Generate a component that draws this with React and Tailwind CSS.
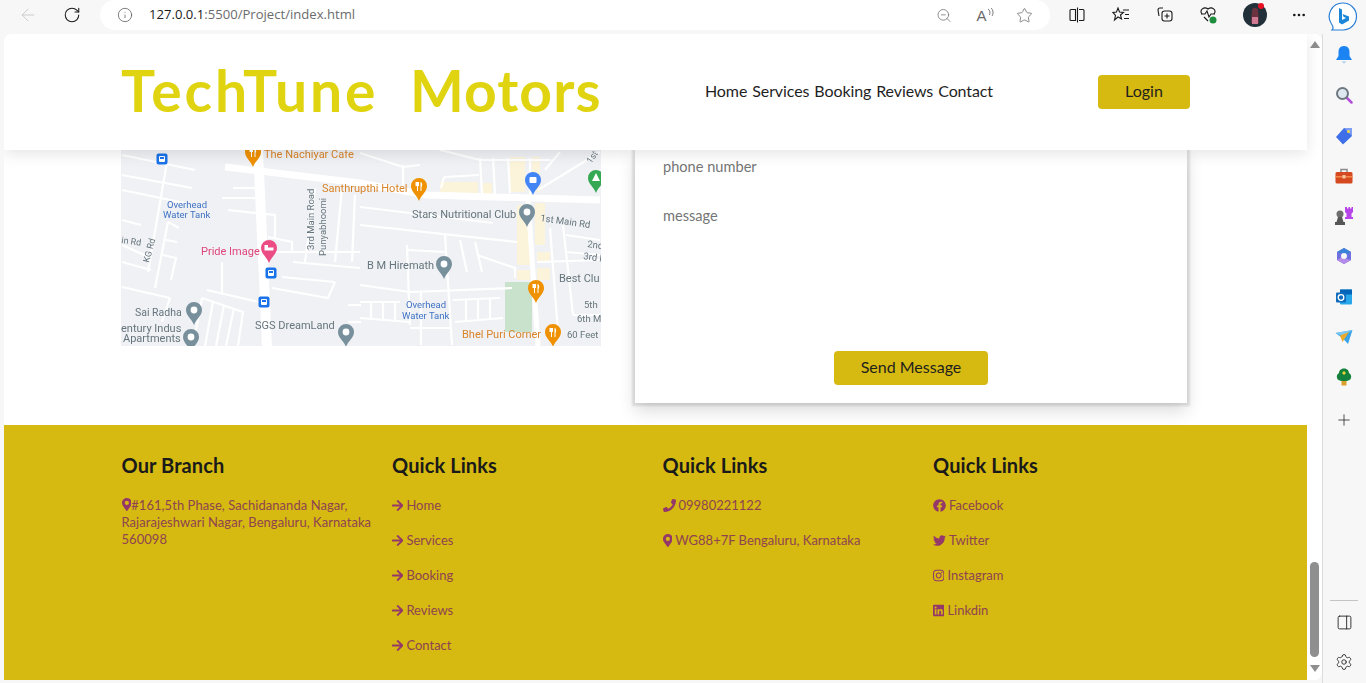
import { ArrowLeft, RotateCw, Info, ZoomOut, Star, Plus, MoreHorizontal, Settings, PanelRight } from 'lucide-react';
import { FaMapMarkerAlt, FaArrowRight, FaPhone, FaFacebook, FaTwitter, FaInstagram, FaLinkedin } from 'react-icons/fa';

const quickLinks = ['Home', 'Services', 'Booking', 'Reviews', 'Contact'];
const socials = [
  { icon: FaFacebook, label: 'Facebook', width: 'w-[13px]' },
  { icon: FaTwitter, label: 'Twitter', width: 'w-[13px]' },
  { icon: FaInstagram, label: 'Instagram', width: 'w-[11.400px]' },
  { icon: FaLinkedin, label: 'Linkdin', width: 'w-[11.400px]' },
];

const Pin = ({ x, y, fill, children }) => (
  <g transform={`translate(${x} ${y})`}>
    <path d="M0 14C-2 8-8 5-8 -1A8 8 0 0 1 8 -1C8 5 2 8 0 14Z" fill={fill} />
    {children || <circle cx="0" cy="-1" r="3.4" fill="#fff" />}
  </g>
);

const Fork = () => (
  <path d="M-3.5 -5V-1H-2V4H-1V-1H0V-5M2 -5C3.5 -4 3.5 -1 2.5 0V4H1.5V-5Z" fill="#fff" />
);

const Bus = ({ x, y }) => (
  <g transform={`translate(${x} ${y})`}>
    <rect x="-5.5" y="-5.5" width="11" height="11" rx="2" fill="#1a73e8" />
    <rect x="-3" y="-3" width="6" height="6" rx="1" fill="#fff" />
    <rect x="-2" y="-2" width="4" height="2" fill="#1a73e8" />
  </g>
);

const MapLabel = ({ x, y, color = '#66757d', size = 11, rotate, children }) => (
  <text
    x={x}
    y={y}
    fill={color}
    fontSize={size}
    fontFamily="Roboto, sans-serif"
    transform={rotate ? `rotate(${rotate} ${x} ${y})` : undefined}
  >
    {children}
  </text>
);

// street lines read off the map, left half then right half
const thinRoads = [
  'M1 5L74 20', 'M1 25L71 38', 'M1 40L64 53', 'M46 12L27 122', 'M47 72L34 138', 'M1 70L20 75', 'M1 95L30 108', 'M1 137L49 148', 'M49 148L41 172',
  'M1 112L30 120', 'M47 72L58 78', 'M45 90L56 92', 'M42 105L55 108L50 130',
  'M112 38H137', 'M101 48H137', 'M107 60L154 65L154 88', 'M147 87L171 92V102', 'M101 112V145', 'M86 140L138 152',
  'M154 102H239', 'M172 112L239 118', 'M151 138L207 148L214 132', 'M161 127L214 132', 'M194 38L184 112', 'M221 38L214 112', 'M234 45L231 112',
  'M81 148L72 196', 'M92 152L84 196', 'M103 155L95 196', 'M113 158L105 196', 'M81 148L122 162L117 196', 'M227 155H240', 'M227 172H240',
  'M239 57L372 73', 'M239 75L396 92', 'M324 85L331 195', 'M286 95L289 175', 'M286 100L325 102', 'M339 90L346 122', 'M354 92L361 122',
  'M356 105L394 118V128', 'M239 135L289 142L391 138', 'M239 152H279', 'M332 150L379 148', 'M334 172L382 168', 'M239 168L289 172',
  'M345 150V170', 'M357 150V170', 'M369 149V169', 'M250 152V170', 'M262 152V170', 'M274 152V170', 'M300 142V195', 'M289 178H330',
  'M359 8L361 45', 'M372 8L374 45', 'M387 8L389 43', 'M409 8V45', 'M239 3L282 17L299 15', 'M282 15V42', 'M319 0L359 10', 'M323 27L320 38', 'M323 27L358 25',
  'M417 40L479 2', 'M439 2L424 20', 'M429 78L437 182', 'M442 75L452 165', 'M445 85L479 90', 'M445 102L479 105', 'M416 112L479 110', 'M452 165H479', 'M360 10H430',
];

const MapDrawing = () => (
  <svg width="480" height="196" viewBox="0 0 480 196" className="block blur-[0.3px]">
    <rect width="480" height="196" fill="#eff1f4" />
    <g fill="#fbf3da">
      <rect x="389" y="7" width="15" height="35" />
      <rect x="396" y="55" width="13" height="60" />
      <rect x="414" y="53" width="10" height="42" />
      <rect x="416" y="102" width="13" height="10" />
      <rect x="416" y="118" width="13" height="12" />
      <rect x="396" y="120" width="13" height="10" />
      <rect x="362" y="33" width="9" height="12" />
      <rect x="319" y="32" width="38" height="11" />
      <rect x="411" y="7" width="8" height="35" />
    </g>
    <rect x="384" y="132" width="27" height="50" fill="#c8e2cb" />
    <g stroke="#fff" fill="none" strokeWidth="2.2">
      {thinRoads.map((d) => (
        <path key={d} d={d} />
      ))}
    </g>
    <g stroke="#fff" fill="none">
      <path d="M137 0L146 196" strokeWidth="10" />
      <path d="M104 17L239 33L305 45L479 50" strokeWidth="7" />
      <path d="M407 50L417 196" strokeWidth="5" />
    </g>
    <MapLabel x={143} y={8} color="#d9842a">The Nachiyar Cafe</MapLabel>
    <MapLabel x={201} y={42} color="#d9842a">Santhrupthi Hotel</MapLabel>
    <MapLabel x={46} y={58} color="#3f72c4" size={9.5}>Overhead</MapLabel>
    <MapLabel x={42} y={68} color="#3f72c4" size={9.5}>Water Tank</MapLabel>
    <MapLabel x={0} y={93} size={9} rotate={8}>in Rd</MapLabel>
    <MapLabel x={28} y={113} size={9} rotate={-75}>KG Rd</MapLabel>
    <MapLabel x={193} y={100} size={9.5} rotate={-90}>3rd Main Road</MapLabel>
    <MapLabel x={205} y={106} size={9.5} rotate={-90}>Punyabhoomi</MapLabel>
    <MapLabel x={80} y={105} color="#e0457b">Pride Image</MapLabel>
    <MapLabel x={14} y={166} size={10.5}>Sai Radha</MapLabel>
    <MapLabel x={0} y={182}>entury Indus</MapLabel>
    <MapLabel x={2} y={192}>Apartments</MapLabel>
    <MapLabel x={134} y={179}>SGS DreamLand</MapLabel>
    <MapLabel x={291} y={68} size={11}>Stars Nutritional Club</MapLabel>
    <MapLabel x={419} y={71} size={9.5} rotate={8}>1st Main Rd</MapLabel>
    <MapLabel x={466} y={97} size={9.5} rotate={8}>2nd</MapLabel>
    <MapLabel x={462} y={109} size={9.5} rotate={8}>3rd R</MapLabel>
    <MapLabel x={246} y={119}>B M Hiremath</MapLabel>
    <MapLabel x={285} y={158} color="#3f72c4" size={9.5}>Overhead</MapLabel>
    <MapLabel x={281} y={169} color="#3f72c4" size={9.5}>Water Tank</MapLabel>
    <MapLabel x={438} y={132}>Best Clu</MapLabel>
    <MapLabel x={463} y={158} size={9.5}>5th</MapLabel>
    <MapLabel x={456} y={172} size={9.5}>6th M</MapLabel>
    <MapLabel x={446} y={188} size={9.5}>60 Feet</MapLabel>
    <MapLabel x={341} y={188} color="#d9842a">Bhel Puri Corner</MapLabel>
    <MapLabel x={470} y={14} size={9} rotate={-55}>1st</MapLabel>
    <Pin x={132} y={3} fill="#ef9100"><Fork /></Pin>
    <Pin x={298} y={37} fill="#ef9100"><Fork /></Pin>
    <Pin x={415} y={139} fill="#ef9100"><Fork /></Pin>
    <Pin x={432} y={183} fill="#ef9100"><Fork /></Pin>
    <Pin x={412} y={31} fill="#4285f4"><rect x="-3.5" y="-4" width="7" height="6" rx="1" fill="#fff" /></Pin>
    <Pin x={475} y={29} fill="#34a853"><path d="M0 -6L4 2H-4Z" fill="#fff" /></Pin>
    <Pin x={148} y={99} fill="#ec4c84"><path d="M-4.5 -4V1.500H4.500V-1.500H-1V-4Z" fill="#fff" /></Pin>
    <Pin x={73} y={161} fill="#78909c" />
    <Pin x={70} y={188} fill="#78909c" />
    <Pin x={225} y={183} fill="#78909c" />
    <Pin x={406} y={63} fill="#78909c" />
    <Pin x={323} y={115} fill="#78909c" />
    <Bus x={41} y={9} />
    <Bus x={150} y={123} />
    <Bus x={143} y={152} />
  </svg>
);

const ToolSlot = ({ children }) => (
  <div className="flex h-[30px] w-[44px] shrink-0 items-center justify-center">{children}</div>
);

const Toolbar = () => (
  <div className="flex h-[34px] shrink-0 items-start pl-[6px]">
    <ToolSlot><ArrowLeft size={20} strokeWidth={1} className="text-[#c4c4c4]" /></ToolSlot>
    <ToolSlot><RotateCw size={18} strokeWidth={1.4} className="text-[#1a1a1a]" /></ToolSlot>
    <div className="ml-[6px] flex h-[30px] w-[950px] shrink-0 items-center rounded-r-[15px] rounded-l-[15px] bg-white pl-[17px] pr-[16px]">
      <Info size={16} strokeWidth={1.2} className="text-[#5f5f5f]" />
      <span className="ml-[16px] font-['Open_Sans',sans-serif] text-[13.100px] text-[#6b6b6b]">
        <span className="text-[#1a1a1a]">127.0.0.1</span>:5500/Project/index.html
      </span>
      <div className="ml-auto flex items-center gap-[19px]">
        <div className="flex w-[20px] justify-center pr-[4px]"><ZoomOut size={17} strokeWidth={1.1} className="text-[#6a6a6a]" /></div>
        <div className="flex w-[20px] items-start justify-center text-[#6a6a6a]">
          <span className="font-['Liberation_Sans',sans-serif] text-[15px] leading-none">A</span>
          <svg width="7" height="9" viewBox="0 0 7 9" fill="none" stroke="currentColor" strokeWidth="0.9">
            <path d="M1 1C3 2 3.500 5 2.500 7M4 0C6.500 2 6.500 6 5 8" />
          </svg>
        </div>
        <div className="flex w-[20px] justify-center"><Star size={17} strokeWidth={1.1} className="text-[#6a6a6a]" /></div>
      </div>
    </div>
    <div className="ml-[5px] flex">
      <ToolSlot>
        <svg width="18" height="18" viewBox="0 0 18 18" fill="none" stroke="#1a1a1a" strokeWidth="1.1">
          <path d="M7.500 3.500H3A1 1 0 0 0 2 4.500V13.500A1 1 0 0 0 3 14.500H7.500Z" />
          <path d="M11 3.500H15A1 1 0 0 1 16 4.500V13.500A1 1 0 0 1 15 14.500H11M9.500 1.500V16.500" />
        </svg>
      </ToolSlot>
      <ToolSlot>
        <svg width="18" height="18" viewBox="0 0 18 18" fill="none" stroke="#1a1a1a" strokeWidth="1.1">
          <path d="M6 2L7.500 6L11.500 6.500L8.500 9L9.500 13L6 11L2.500 14L3.500 9.500L1 6.500L4.500 6Z" />
          <path d="M11 4H17M13 8.500H17M12 12.500H17" />
        </svg>
      </ToolSlot>
      <ToolSlot>
        <svg width="18" height="18" viewBox="0 0 18 18" fill="none" stroke="#1a1a1a" strokeWidth="1.1">
          <path d="M7 2H4A2 2 0 0 0 2 4L3 10" />
          <rect x="6" y="5" width="10" height="10" rx="2.500" />
          <path d="M11 7.500V12.500M8.500 10H13.500" />
        </svg>
      </ToolSlot>
      <ToolSlot>
        <svg width="20" height="20" viewBox="0 0 20 20" fill="none">
          <path d="M3 9C0 5 5 1 9 4C13 1 18 5 15 9" stroke="#1a1a1a" strokeWidth="1.1" />
          <path d="M2 9H6L8 6L10 12L12 9H16M5 12L9 16" stroke="#1a1a1a" strokeWidth="1.1" />
          <circle cx="14" cy="15" r="3.500" fill="#1e8e3e" />
        </svg>
      </ToolSlot>
      <div className="relative ml-[2px] flex h-[30px] w-[44px] shrink-0 items-center justify-center">
        <svg width="24" height="24" viewBox="0 0 24 24">
          <circle cx="12" cy="12" r="12" fill="#22303a" />
          <path d="M9 7C10 4 14 4 15 7L16 20H8Z" fill="#6b3240" />
          <path d="M9 14H15V21H9Z" fill="#cf7a92" />
        </svg>
        <div className="absolute left-[25px] top-[3px] h-[6px] w-[6px] rounded-full bg-[#e81123]" />
      </div>
      <ToolSlot><MoreHorizontal size={16} className="text-[#1a1a1a]" /></ToolSlot>
      <div className="flex h-[34px] w-[44px] shrink-0 items-center justify-center">
        <svg width="30" height="30" viewBox="0 0 30 30" fill="none">
          <path d="M15 1A13.500 13.500 0 0 1 15 28H4C6 26 5 24 3.500 22A13.500 13.500 0 0 1 15 1Z" fill="#fff" stroke="#2b7fd6" strokeWidth="1.2" />
          <path d="M11 6L14 7.500V18L18 16L15.500 14.800L14.500 12L21 14.500V18.500L14 22.500L11 20.500Z" fill="#1a86d8" />
        </svg>
      </div>
    </div>
  </div>
);

const sideIcons = [
  <svg key="bell" width="18" height="20" viewBox="0 0 18 20"><path d="M9 1C5 1 3.500 4 3.500 7V11L1 15H17L14.500 11V7C14.500 4 13 1 9 1Z" fill="#1b84f2" /><path d="M6.500 16.500H11.500L9 18.500Z" fill="#9fc8f5" /></svg>,
  <svg key="search" width="18" height="18" viewBox="0 0 18 18" fill="none"><path d="M11 11L16.500 16.500" stroke="#b14fd8" strokeWidth="2.500" strokeLinecap="round" /><circle cx="7.500" cy="7.500" r="5.500" fill="#dfe7ee" stroke="#6d7780" strokeWidth="2" /></svg>,
  <svg key="tag" width="18" height="18" viewBox="0 0 18 18"><path d="M9 1H17V9L8 17.500L1 10Z" fill="#3f6fe8" /><path d="M9 1H17V9Z" fill="#7da0f5" /><circle cx="13.500" cy="4.500" r="1.500" fill="#f5d547" /></svg>,
  <svg key="box" width="18" height="16" viewBox="0 0 18 16"><path d="M6 4V1.500H12V4" fill="none" stroke="#8c8c8c" strokeWidth="1.500" /><rect x="0.500" y="4" width="17" height="11.500" rx="1.500" fill="#d6481f" /><rect x="0.500" y="8" width="17" height="1.500" fill="#f28a4b" /><rect x="7.500" y="7" width="3" height="3.500" fill="#f7c59f" /></svg>,
  <svg key="chess" width="20" height="20" viewBox="0 0 20 20"><path d="M11 1H13V2.500H14.500V1H16V2.500H17.500V1H19V6L17.500 7.500V11H19V13H11V11H12.500V7.500L11 6Z" fill="#b845ea" /><circle cx="6" cy="8" r="3.500" fill="#6e6e6e" /><path d="M4 11H8L9.500 16H11V19H1V16H2.500Z" fill="#565656" /></svg>,
  <svg key="m365" width="18" height="18" viewBox="0 0 18 18"><path d="M9 1L16 5V13L9 17L2 13V5Z" fill="#6f6fe0" /><path d="M9 1L16 5L12 7.500L2 5Z" fill="#3b83d8" /><path d="M2 13L6 10.500L16 13L9 17Z" fill="#b48be8" /><circle cx="9" cy="9" r="3" fill="#f7f7f7" /></svg>,
  <svg key="outlook" width="18" height="18" viewBox="0 0 18 18"><rect x="5" y="1.500" width="12" height="15" rx="1" fill="#28a8ea" /><rect x="5" y="1.500" width="12" height="5" fill="#0364b8" /><rect x="1" y="4.500" width="10" height="10" rx="1" fill="#0f6cbd" /><circle cx="6" cy="9.500" r="2.800" fill="none" stroke="#fff" strokeWidth="1.300" /></svg>,
  <svg key="send" width="18" height="16" viewBox="0 0 18 16"><path d="M0.500 4L17.500 1L13 15L8 9.500Z" fill="#38a3e8" /><path d="M0.500 4L17.500 1L8 7Z" fill="#7cc9f5" /><path d="M5 6.500L14 3L7.500 13Z" fill="#eda92c" /></svg>,
  <svg key="tree" width="16" height="18" viewBox="0 0 16 18"><rect x="5.500" y="12" width="5" height="5.500" fill="#d9a02c" /><path d="M8 0.500C4.500 0.500 3 3 3 5C1 6 0.500 8 1 10C1.500 12.500 5 13 8 13C11 13 14.500 12.500 15 10C15.500 8 15 6 13 5C13 3 11.500 0.500 8 0.500Z" fill="#14823c" /><path d="M8 3L10 5L8 7L6 5Z" fill="#e9d233" /></svg>,
];

const Sidebar = () => (
  <div className="flex w-[44px] shrink-0 flex-col items-center border-l border-[#dcdcdc] pt-[1px] pr-[1px]">
    {sideIcons.map((icon) => (
      <div key={icon.key} className="flex h-[40.250px] w-full items-center justify-center">{icon}</div>
    ))}
    <div className="flex h-[45px] w-full items-center justify-center">
      <Plus size={18} strokeWidth={1} className="text-[#1a1a1a]" />
    </div>
    <div className="mt-auto h-px w-[28px] bg-[#c4c4c4]" />
    <div className="mt-[11px] flex h-[20px] items-center justify-center">
      <PanelRight size={17} strokeWidth={1.2} className="text-[#1a1a1a]" />
    </div>
    <div className="mb-[11px] mt-[20px] flex h-[20px] items-center justify-center">
      <Settings size={18} strokeWidth={1.1} className="text-[#1a1a1a]" />
    </div>
  </div>
);

const Header = () => (
  <div className="relative z-10 flex h-[116px] shrink-0 items-center bg-white pl-[117px] pr-[117px] shadow-[0_4px_14px_rgba(0,0,0,0.1)]">
    <h1 className="w-[584px] shrink-0 whitespace-pre pb-[3px] text-[57px] font-bold leading-none text-[#e0d410]">
      <span className="tracking-[2.900px]">TechTune</span>
      <span className="tracking-[1.900px]">  </span>
      <span className="tracking-[1.100px]">Motors</span>
    </h1>
    <nav className="flex gap-[5px] pb-[2px] text-[16px] tracking-[-0.1px] text-[#1f1f1f]">
      <a>Home</a>
      <a>Services</a>
      <a>Booking</a>
      <a>Reviews</a>
      <a>Contact</a>
    </nav>
    <button className="ml-auto h-[34px] w-[92px] rounded-[4px] bg-[#d6b911] pb-[2px] text-[16px] text-[#1f1f1f]">Login</button>
  </div>
);

const ContactRow = () => (
  <div className="flex h-[275px] shrink-0 items-start pl-[117px]">
    <MapDrawing />
    <form className="ml-[34px] flex h-[253px] w-[552px] shrink-0 flex-col bg-white px-[28px] shadow-[0_0_2px_3px_rgba(0,0,0,0.1),0_8px_16px_rgba(0,0,0,0.14)]">
      <input placeholder="phone number" className="h-[32px] w-full bg-transparent text-[14.6px] outline-none placeholder:text-[#757575]" />
      <textarea placeholder="message" className="mt-[16px] h-[130px] w-full resize-none bg-transparent py-[7px] text-[14.6px] outline-none placeholder:text-[#757575]" />
      <button type="button" className="mx-auto mt-[23px] h-[34px] w-[154px] shrink-0 rounded-[4px] bg-[#d6b911] pb-[2px] text-[16px] text-[#1f1f1f]">Send Message</button>
    </form>
  </div>
);

const FooterTitle = ({ children }) => (
  <h3 className="text-[20px] font-bold leading-[24px] tracking-[0.1px] text-[#1a1a1a]">{children}</h3>
);

const FooterLink = ({ icon: Icon, width, children }) => (
  <a className="flex h-[35px] items-center text-[13px] text-[#8e4450]">
    <Icon className={`mr-[3px] h-[13px] shrink-0 text-[#94386a] ${width}`} />
    {children}
  </a>
);

const Footer = () => (
  <footer className="grid h-[255px] shrink-0 grid-cols-[270.500px_270.500px_270.500px_270.500px] bg-[#d6b911] pl-[117.500px] pt-[28px]">
    <div className="pr-[20px]">
      <FooterTitle>Our Branch</FooterTitle>
      <p className="mt-[20px] text-[13px] leading-[17px] tracking-[0.05px] text-[#8e4450]">
        <FaMapMarkerAlt className="inline h-[13px] w-[9.750px] align-[-1px] text-[#94386a]" />
        #161,5th Phase, Sachidananda Nagar, Rajarajeshwari Nagar, Bengaluru, Karnataka 560098
      </p>
    </div>
    <div>
      <FooterTitle>Quick Links</FooterTitle>
      <div className="mt-[11px]">
        {quickLinks.map((link) => (
          <FooterLink key={link} icon={FaArrowRight} width="w-[11.400px]">{link}</FooterLink>
        ))}
      </div>
    </div>
    <div>
      <FooterTitle>Quick Links</FooterTitle>
      <div className="mt-[11px]">
        <FooterLink icon={FaPhone} width="w-[13px]">09980221122</FooterLink>
        <FooterLink icon={FaMapMarkerAlt} width="w-[9.750px]">WG88+7F Bengaluru, Karnataka</FooterLink>
      </div>
    </div>
    <div>
      <FooterTitle>Quick Links</FooterTitle>
      <div className="mt-[11px]">
        {socials.map((item) => (
          <FooterLink key={item.label} icon={item.icon} width={item.width}>{item.label}</FooterLink>
        ))}
      </div>
    </div>
  </footer>
);

const Scrollbar = () => (
  <div className="flex w-[15px] shrink-0 flex-col items-center bg-white pb-[8px] pt-[7px]">
    <div className="h-0 w-0 border-x-[5px] border-b-[7px] border-x-transparent border-b-[#8f8f8f]" />
    <div className="mt-auto h-[95px] w-[9px] rounded-full bg-[#8f8f8f]" />
    <div className="mt-[8px] h-0 w-0 border-x-[5px] border-t-[7px] border-x-transparent border-t-[#8f8f8f]" />
  </div>
);

export default function App() {
  return (
    <div className="flex h-[683px] w-[1366px] flex-col overflow-hidden bg-[#f7f7f7] font-['Lato','Open_Sans',sans-serif]">
      <Toolbar />
      <div className="flex min-h-0 flex-1">
        <div className="mb-[3px] ml-[4px] flex w-[1318px] shrink-0 overflow-hidden rounded-t-[8px] rounded-br-[8px] bg-white">
          <div className="flex w-[1303px] shrink-0 flex-col">
            <Header />
            <ContactRow />
            <Footer />
          </div>
          <Scrollbar />
        </div>
        <Sidebar />
      </div>
    </div>
  );
}
